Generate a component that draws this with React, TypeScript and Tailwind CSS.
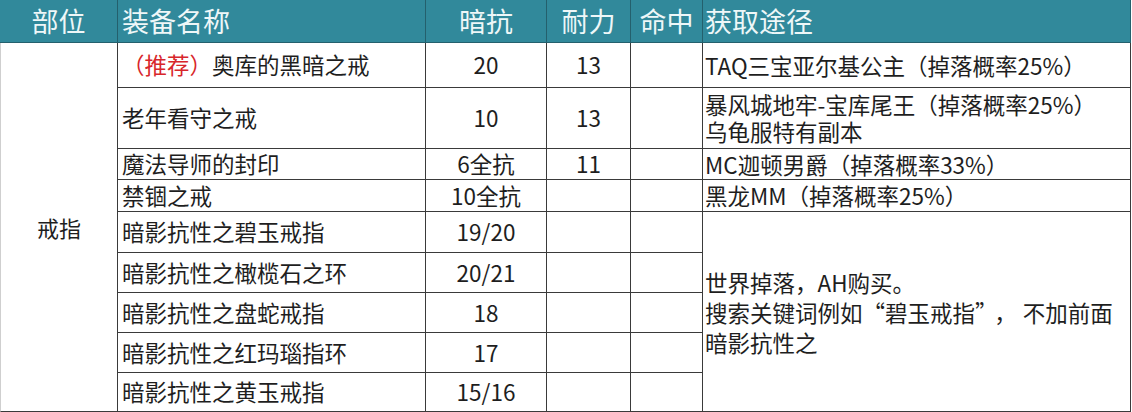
import React from "react";

const font = { fontFamily: '"Noto Sans CJK SC", "Noto Sans", sans-serif' };

type Item = { name: React.ReactNode; an: string; nai: string; ming: string; src?: React.ReactNode };

const items: Item[] = [
    {
        name: <><span className="text-[#d8262b]">（推荐）</span>奥库的黑暗之戒</>,
        an: "20", nai: "13", ming: "",
        src: "TAQ三宝亚尔基公主（掉落概率25%）",
    },
    {
        name: "老年看守之戒", an: "10", nai: "13", ming: "",
        src: <>暴风城地牢-宝库尾王（掉落概率25%）<br />乌龟服特有副本</>,
    },
    { name: "魔法导师的封印", an: "6全抗", nai: "11", ming: "", src: "MC迦顿男爵（掉落概率33%）" },
    { name: "禁锢之戒", an: "10全抗", nai: "", ming: "", src: "黑龙MM（掉落概率25%）" },
    { name: "暗影抗性之碧玉戒指", an: "19/20", nai: "", ming: "" },
    { name: "暗影抗性之橄榄石之环", an: "20/21", nai: "", ming: "" },
    { name: "暗影抗性之盘蛇戒指", an: "18", nai: "", ming: "" },
    { name: "暗影抗性之红玛瑙指环", an: "17", nai: "", ming: "" },
    { name: "暗影抗性之黄玉戒指", an: "15/16", nai: "", ming: "" },
];

const rowHeights = ["h-[45px]", "h-[61px]", "h-[31px]", "h-[32px]", "h-[41px]", "h-[40px]", "h-[40px]", "h-[40px]", "h-[39px]"];

const cell = "border-r border-b border-[#3a3a3a] flex items-center";
const head = "bg-[#31899b] text-[#eef7f8] text-[27px] border-r border-b border-[#24606d] flex items-center";

export default function App() {
    return (
        <div lang="zh-CN" style={font} className="w-[1132px] h-[412px] bg-white text-[#1e1e1e] overflow-hidden">
            <div className="grid grid-cols-[118px_308px_121px_84px_72px_428px] grid-rows-[43px_45px_61px_31px_32px_41px_40px_40px_40px_39px]">
                {/* header */}
                <div className={`${head} justify-center`}>部位</div>
                <div className={`${head} pl-[4px]`}>装备名称</div>
                <div className={`${head} justify-center`}>暗抗</div>
                <div className={`${head} justify-center`}>耐力</div>
                <div className={`${head} justify-center`}>命中</div>
                <div className={`${head} pl-[2px]`}>获取途径</div>

                {/* 部位 merged */}
                <div className={`${cell} row-span-9 border-l border-l-[#cfcfcf] justify-center text-[22px]`}>戒指</div>

                {items.map((it, i) => (
                    <React.Fragment key={i}>
                        <div className={`${cell} ${rowHeights[i]} pl-[4px] text-[22.5px] whitespace-nowrap`}>{it.name}</div>
                        <div className={`${cell} justify-center text-[22.5px]`}>{it.an}</div>
                        <div className={`${cell} justify-center text-[22.5px]`}>{it.nai}</div>
                        <div className={cell}>{it.ming}</div>
                        {i < 4 && (
                            <div className={`${cell} pl-[2px] text-[22.5px] leading-[27px] whitespace-nowrap`}>{it.src}</div>
                        )}
                        {i === 4 && (
                            <div className={`${cell} row-span-5 pl-[2px] text-[22.5px] leading-[30px] whitespace-nowrap`}>
                                <div>
                                    世界掉落，AH购买。<br />
                                    搜索关键词例如“碧玉戒指”<span className="ml-[8px] mr-[6px]">，</span>不加前面<br />
                                    暗影抗性之
                                </div>
                            </div>
                        )}
                    </React.Fragment>
                ))}
            </div>
        </div>
    );
}
